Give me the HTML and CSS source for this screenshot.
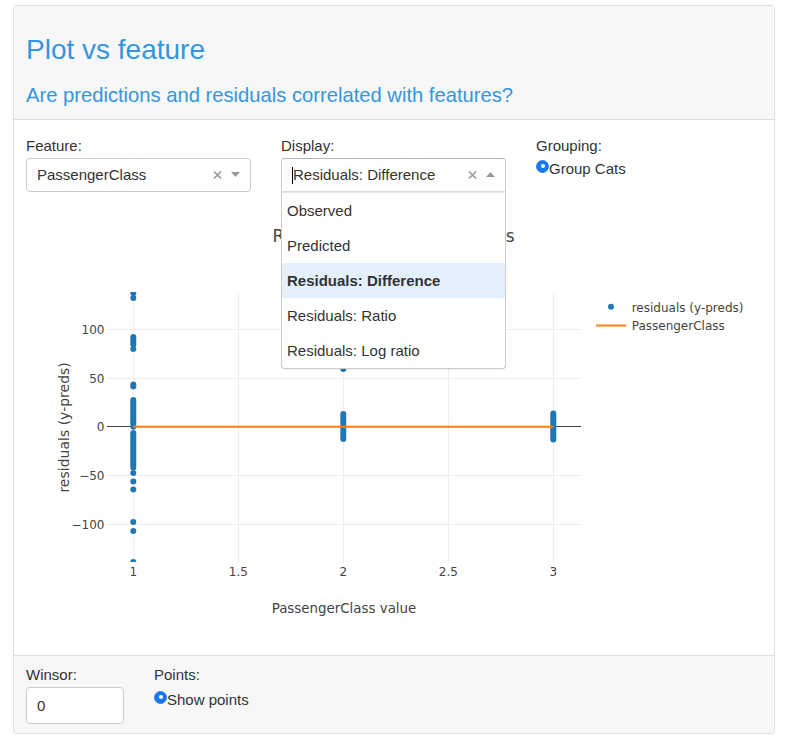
FILE: index.html
```html
<!DOCTYPE html>
<html lang="en">
<head>
<meta charset="utf-8">
<title>Plot vs feature</title>
<link rel="stylesheet" href="styles.css">
</head>
<body>
<div class="card">
  <div class="card-header">
    <h3 class="title">Plot vs feature</h3>
    <h6 class="subtitle">Are predictions and residuals correlated with features?</h6>
  </div>
  <div class="card-body">
    <div class="controls">
      <div class="col">
        <label class="field-label">Feature:</label>
        <div class="select">
          <span class="value">PassengerClass</span>
          <span class="clear"><svg width="9" height="8" viewBox="0 0 9 8"><path d="M1 0.5L8 7.5M8 0.5L1 7.5" stroke="#999" stroke-width="1.6" fill="none"/></svg></span>
          <span class="arrow"><svg width="9" height="5" viewBox="0 0 9 5"><polygon points="0,0 9,0 4.5,5" fill="#999"/></svg></span>
        </div>
      </div>
      <div class="col">
        <label class="field-label">Display:</label>
        <div class="select open">
          <span class="value"><span class="cursor"></span>Residuals: Difference</span>
          <span class="clear"><svg width="9" height="8" viewBox="0 0 9 8"><path d="M1 0.5L8 7.5M8 0.5L1 7.5" stroke="#999" stroke-width="1.6" fill="none"/></svg></span>
          <span class="arrow"><svg width="9" height="5" viewBox="0 0 9 5"><polygon points="0,5 9,5 4.5,0" fill="#999"/></svg></span>
          <div class="menu">
            <div class="opt">Observed</div>
            <div class="opt">Predicted</div>
            <div class="opt active">Residuals: Difference</div>
            <div class="opt">Residuals: Ratio</div>
            <div class="opt">Residuals: Log ratio</div>
          </div>
        </div>
      </div>
      <div class="col">
        <label class="field-label">Grouping:</label>
        <div class="radio-row"><span class="radio"></span>Group Cats</div>
      </div>
    </div>
    <svg class="plot" width="735" height="460" viewBox="26 195 735 460">
      <defs>
        <clipPath id="plotclip"><rect x="107" y="292" width="474" height="270"/></clipPath>
      </defs>
      <text class="ptitle" x="393.5" y="242" text-anchor="middle">Residuals vs PassengerClass</text>
      <g class="grid">
        <line x1="133.5" y1="292" x2="133.5" y2="562"/>
        <line x1="238.5" y1="292" x2="238.5" y2="562"/>
        <line x1="343.5" y1="292" x2="343.5" y2="562"/>
        <line x1="448.5" y1="292" x2="448.5" y2="562"/>
        <line x1="553.5" y1="292" x2="553.5" y2="562"/>
        <line x1="107" y1="329.5" x2="581" y2="329.5"/>
        <line x1="107" y1="378.5" x2="581" y2="378.5"/>
        <line x1="107" y1="475.5" x2="581" y2="475.5"/>
        <line x1="107" y1="524.5" x2="581" y2="524.5"/>
      </g>
      <line class="zero" x1="107" y1="426.5" x2="581" y2="426.5"/>
      <g class="ticks">
        <text class="tick" x="104.5" y="333.8" text-anchor="end">100</text>
        <text class="tick" x="104.5" y="382.8" text-anchor="end">50</text>
        <text class="tick" x="104.5" y="431.2" text-anchor="end">0</text>
        <text class="tick" x="104.5" y="480" text-anchor="end">&#8722;50</text>
        <text class="tick" x="104.5" y="528.8" text-anchor="end">&#8722;100</text>
        <text class="tick" x="133.3" y="575.5" text-anchor="middle">1</text>
        <text class="tick" x="238.3" y="575.5" text-anchor="middle">1.5</text>
        <text class="tick" x="343.3" y="575.5" text-anchor="middle">2</text>
        <text class="tick" x="448.3" y="575.5" text-anchor="middle">2.5</text>
        <text class="tick" x="553.3" y="575.5" text-anchor="middle">3</text>
      </g>
      <text class="xtitle" x="344" y="613" text-anchor="middle">PassengerClass value</text>
      <text class="ytitle" transform="translate(68.5,427.4) rotate(-90)" text-anchor="middle">residuals (y-preds)</text>
      <g class="pts" clip-path="url(#plotclip)">
        <circle cx="133.3" cy="293" r="3"/><circle cx="133.3" cy="298" r="3"/>
        <circle cx="133.3" cy="337" r="3"/><circle cx="133.3" cy="339.5" r="3"/><circle cx="133.3" cy="342" r="3"/><circle cx="133.3" cy="344.5" r="3"/><circle cx="133.3" cy="349" r="3"/>
        <circle cx="133.3" cy="384.5" r="3"/><circle cx="133.3" cy="386.5" r="3"/>
        <circle cx="133.3" cy="400" r="3"/><circle cx="133.3" cy="402" r="3"/><circle cx="133.3" cy="404" r="3"/><circle cx="133.3" cy="406" r="3"/><circle cx="133.3" cy="408" r="3"/><circle cx="133.3" cy="410" r="3"/><circle cx="133.3" cy="412" r="3"/><circle cx="133.3" cy="414" r="3"/><circle cx="133.3" cy="416" r="3"/><circle cx="133.3" cy="418" r="3"/><circle cx="133.3" cy="420" r="3"/><circle cx="133.3" cy="422" r="3"/><circle cx="133.3" cy="424" r="3"/><circle cx="133.3" cy="426.7" r="3"/>
        <circle cx="133.3" cy="433" r="3"/><circle cx="133.3" cy="435" r="3"/><circle cx="133.3" cy="437" r="3"/><circle cx="133.3" cy="439" r="3"/><circle cx="133.3" cy="441" r="3"/><circle cx="133.3" cy="443" r="3"/><circle cx="133.3" cy="445" r="3"/><circle cx="133.3" cy="447" r="3"/><circle cx="133.3" cy="449" r="3"/><circle cx="133.3" cy="451" r="3"/><circle cx="133.3" cy="453" r="3"/><circle cx="133.3" cy="455" r="3"/><circle cx="133.3" cy="457" r="3"/><circle cx="133.3" cy="459" r="3"/><circle cx="133.3" cy="461" r="3"/><circle cx="133.3" cy="463" r="3"/><circle cx="133.3" cy="465" r="3"/><circle cx="133.3" cy="467.5" r="3"/>
        <circle cx="133.3" cy="473" r="3"/><circle cx="133.3" cy="481.5" r="3"/><circle cx="133.3" cy="489.5" r="3"/>
        <circle cx="133.3" cy="522" r="3"/><circle cx="133.3" cy="531" r="3"/><circle cx="133.3" cy="562" r="3"/>
        <circle cx="343.3" cy="369" r="3"/>
        <circle cx="343.3" cy="414" r="3"/><circle cx="343.3" cy="416.5" r="3"/><circle cx="343.3" cy="419" r="3"/><circle cx="343.3" cy="421.5" r="3"/><circle cx="343.3" cy="424" r="3"/><circle cx="343.3" cy="426.5" r="3"/><circle cx="343.3" cy="429" r="3"/><circle cx="343.3" cy="431.5" r="3"/><circle cx="343.3" cy="434" r="3"/><circle cx="343.3" cy="436.5" r="3"/><circle cx="343.3" cy="439" r="3"/>
        <circle cx="553.3" cy="413.5" r="3"/><circle cx="553.3" cy="415.5" r="3"/><circle cx="553.3" cy="417.5" r="3"/><circle cx="553.3" cy="419.5" r="3"/><circle cx="553.3" cy="421.5" r="3"/><circle cx="553.3" cy="423.5" r="3"/><circle cx="553.3" cy="425.5" r="3"/><circle cx="553.3" cy="427.5" r="3"/><circle cx="553.3" cy="429.5" r="3"/><circle cx="553.3" cy="431.5" r="3"/><circle cx="553.3" cy="433.5" r="3"/><circle cx="553.3" cy="435.5" r="3"/><circle cx="553.3" cy="437.5" r="3"/><circle cx="553.3" cy="439.5" r="3"/>
      </g>
      <line class="orange" x1="133.3" y1="426.7" x2="553.3" y2="426.7"/>
      <g class="legend">
        <circle class="legdot" cx="611" cy="306.7" r="3"/>
        <text class="leg" x="631.7" y="311.5">residuals (y-preds)</text>
        <line class="orange" x1="596" y1="325.5" x2="626" y2="325.5"/>
        <text class="leg" x="631.7" y="330">PassengerClass</text>
      </g>
    </svg>
  </div>
  <div class="card-footer">
    <div class="winsor">
      <label class="field-label">Winsor:</label>
      <input class="input" type="text" value="0">
    </div>
    <div class="points">
      <label class="field-label">Points:</label>
      <div class="radio-row footer-radio"><span class="radio"></span>Show points</div>
    </div>
  </div>
</div>
</body>
</html>
```
FILE: styles.css
```css
body {
  margin: 0;
  font-family: "Liberation Sans", Arial, sans-serif;
  color: #333;
  background: #fff;
}

.card {
  margin: 5px 10px 0 13px;
  width: 762px;
  box-sizing: border-box;
  border: 1px solid #dfdfdf;
  border-radius: 3px;
  background: #fff;
}

.card-header {
  background: #f7f7f7;
  border-bottom: 1px solid #dfdfdf;
  padding: 27px 12px 12px;
  border-radius: 3px 3px 0 0;
}

.title {
  margin: 0 0 16px;
  font-size: 28px;
  font-weight: 400;
  line-height: 1.2;
  color: #3496de;
}

.subtitle {
  margin: 0;
  font-size: 20.2px;
  font-weight: 400;
  line-height: 1.2;
  color: #3496de;
}

.card-body {
  padding: 15px 12px 0;
}

.controls {
  display: flex;
  gap: 30px;
}

.col {
  width: 225px;
}

.field-label {
  display: block;
  font-size: 15px;
  line-height: 21px;
  margin-bottom: 2px;
}

.select {
  position: relative;
  display: flex;
  align-items: center;
  height: 34px;
  box-sizing: border-box;
  border: 1px solid #ccc;
  border-radius: 4px;
  padding-left: 10px;
  background: #fff;
  font-size: 15px;
  line-height: 21px;
}

.select.open {
  border-radius: 4px 4px 0 0;
  border-color: #b3b3b3 #ccc #d9d9d9;
}

.value {
  flex: 1;
  white-space: nowrap;
  overflow: hidden;
}

.cursor {
  display: inline-block;
  width: 1px;
  height: 17px;
  background: #000;
  vertical-align: -4px;
}

.clear {
  display: flex;
  width: 9px;
  margin-right: 9px;
}

.arrow {
  display: flex;
  width: 9px;
  margin-right: 10px;
}

.menu {
  position: absolute;
  top: 33px;
  left: -1px;
  right: -1px;
  background: #fff;
  border: 1px solid #ccc;
  border-top-color: #e6e6e6;
  border-radius: 0 0 4px 4px;
  box-shadow: 0 1px 0 rgba(0, 0, 0, 0.06);
  z-index: 2;
}

.opt {
  padding: 7px 5px 7px;
  font-size: 15px;
  line-height: 21px;
  color: #333;
  white-space: nowrap;
}

.opt.active {
  background: #e5f0fd;
  font-weight: 700;
}

.radio-row {
  margin-top: 2px;
  font-size: 15px;
  line-height: 21px;
  white-space: nowrap;
}

.footer-radio {
  margin-top: 4px;
}

.radio {
  position: relative;
  display: inline-block;
  width: 13px;
  height: 13px;
  box-sizing: border-box;
  border-radius: 50%;
  border: 1px solid #2a7fe6;
  background: #1677f2;
  vertical-align: 1px;
}

.radio::after {
  content: "";
  position: absolute;
  left: 50%;
  top: 50%;
  width: 4px;
  height: 4px;
  margin: -2px 0 0 -2px;
  border-radius: 50%;
  background: #fff;
}

.plot {
  display: block;
  margin-top: 3px;
  width: 735px;
  height: 460px;
}

.plot text {
  font-family: "DejaVu Sans", Verdana, sans-serif;
  fill: #444;
}

.ptitle { font-size: 17px; }
.tick { font-size: 12px; }
.xtitle { font-size: 13.4px; }
.ytitle { font-size: 14px; }
.leg { font-size: 12px; }

.grid line {
  stroke: #eee;
  stroke-width: 1;
}

.zero {
  stroke: #444;
  stroke-width: 1;
}

.pts circle,
.legdot {
  fill: #1f77b4;
}

.orange {
  stroke: #ff7f0e;
  stroke-width: 2;
}

.card-footer {
  display: flex;
  gap: 30px;
  background: #f7f7f7;
  border-top: 1px solid #dfdfdf;
  padding: 8px 12px 9px;
  border-radius: 0 0 3px 3px;
}

.winsor {
  width: 98px;
}

.input {
  display: block;
  box-sizing: border-box;
  width: 98px;
  height: 37px;
  margin: 0;
  border: 1px solid #ccc;
  border-radius: 4px;
  padding: 0 10px;
  font-family: "Liberation Sans", Arial, sans-serif;
  font-size: 15px;
  color: #333;
  background: #fff;
}
```
